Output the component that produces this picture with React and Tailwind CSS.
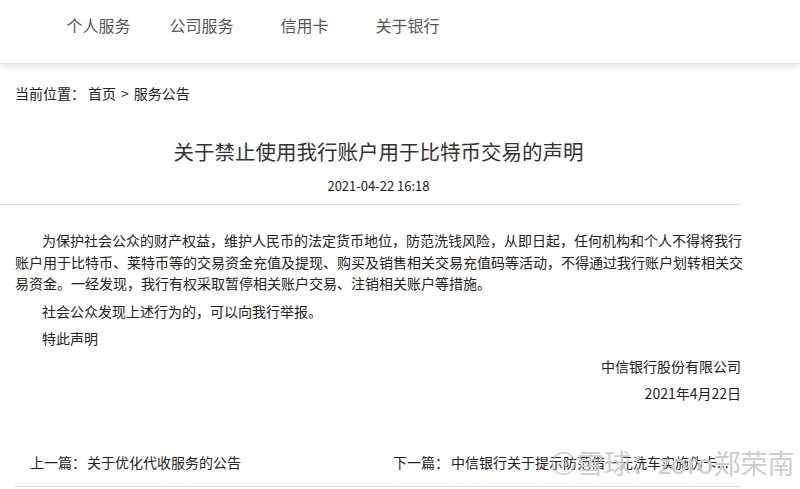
import React from "react";

const font = { fontFamily: '"Microsoft YaHei", "Noto Sans CJK SC", "Liberation Sans", sans-serif' };

export default function App() {
  const nav = ["个人服务", "公司服务", "信用卡", "关于银行"];
  return (
    <div className="relative w-[800px] h-[489px] overflow-hidden bg-white text-[#333]" style={font}>
      <header className="h-[64px] bg-white shadow-[0_2px_8px_rgba(0,0,0,0.12)] border-b border-[#e6e6e6] relative z-10">
        <nav className="flex pl-[47px] pt-[13px]">
          {nav.map((n) => (
            <div key={n} className="w-[103px] text-center text-[16px] leading-[24px] text-[#555]">
              {n}
            </div>
          ))}
        </nav>
      </header>

      <div className="w-[729px] ml-[15px]">
        <div className="mt-[20px] text-[14px] leading-[18px] text-[#222] flex">
          <span>当前位置：</span>
          <span className="ml-[3px]">首页</span>
          <span className="mx-[5px]">&gt;</span>
          <span>服务公告</span>
        </div>

        <h1 className="mt-[36px] -ml-[2px] text-center text-[20.5px] leading-[26px] text-[#333]">
          关于禁止使用我行账户用于比特币交易的声明
        </h1>
        <div className="mt-[14px] -ml-[2px] text-center text-[13px] leading-[16px] text-[#222]">
          2021-04-22 16:18
        </div>
        <div className="mt-[10px] h-px bg-[#d8d8d8] -ml-[15px] w-[741px]" />

        <div className="mt-[25px] text-[14px] leading-[21.5px] text-[#222]">
          <p className="indent-[27px] mb-[6px]">
            为保护社会公众的财产权益，维护人民币的法定货币地位，防范洗钱风险，从即日起，任何机构和个人不得将我行账户用于比特币、莱特币等的交易资金充值及提现、购买及销售相关交易充值码等活动，不得通过我行账户划转相关交易资金。一经发现，我行有权采取暂停相关账户交易、注销相关账户等措施。
          </p>
          <p className="indent-[27px] mb-[6px]">社会公众发现上述行为的，可以向我行举报。</p>
          <p className="indent-[27px] mb-[6px]">特此声明</p>
          <p className="text-right pr-[3px] mb-[6px]">中信银行股份有限公司</p>
          <p className="text-right pr-[3px]">2021年4月22日</p>
        </div>

        <div className="mt-[47px] flex text-[14px] leading-[20px] text-[#222]">
          <div className="w-[378px] pl-[15px] flex">
            <span>上一篇：</span>
            <span className="ml-[1px]">关于优化代收服务的公告</span>
          </div>
          <div className="flex">
            <span>下一篇：</span>
            <span className="ml-[2px]">中信银行关于提示防范借一元洗车实施伪卡...</span>
          </div>
        </div>
        <div className="mt-[14px] h-px bg-[#e0e0e0] w-[726px]" />
      </div>

      {/* watermark */}
      <div className="absolute left-[551px] top-[448px] flex items-center pointer-events-none">
        <svg width="25" height="25" viewBox="0 0 24 24" className="opacity-60">
          <circle cx="12" cy="12" r="10.5" fill="none" stroke="#b8b8b8" strokeWidth="1.6" />
          <path d="M7 15 Q10 8 16 8 M9 16 Q13 12 17 12" fill="none" stroke="#b8b8b8" strokeWidth="1.4" />
        </svg>
        <span className="ml-[1px] text-[27px] leading-[30px] text-[rgba(175,175,175,0.65)] [text-shadow:0_0_1px_#fff]">
          雪球：zoro郑荣南
        </span>
      </div>
    </div>
  );
}
